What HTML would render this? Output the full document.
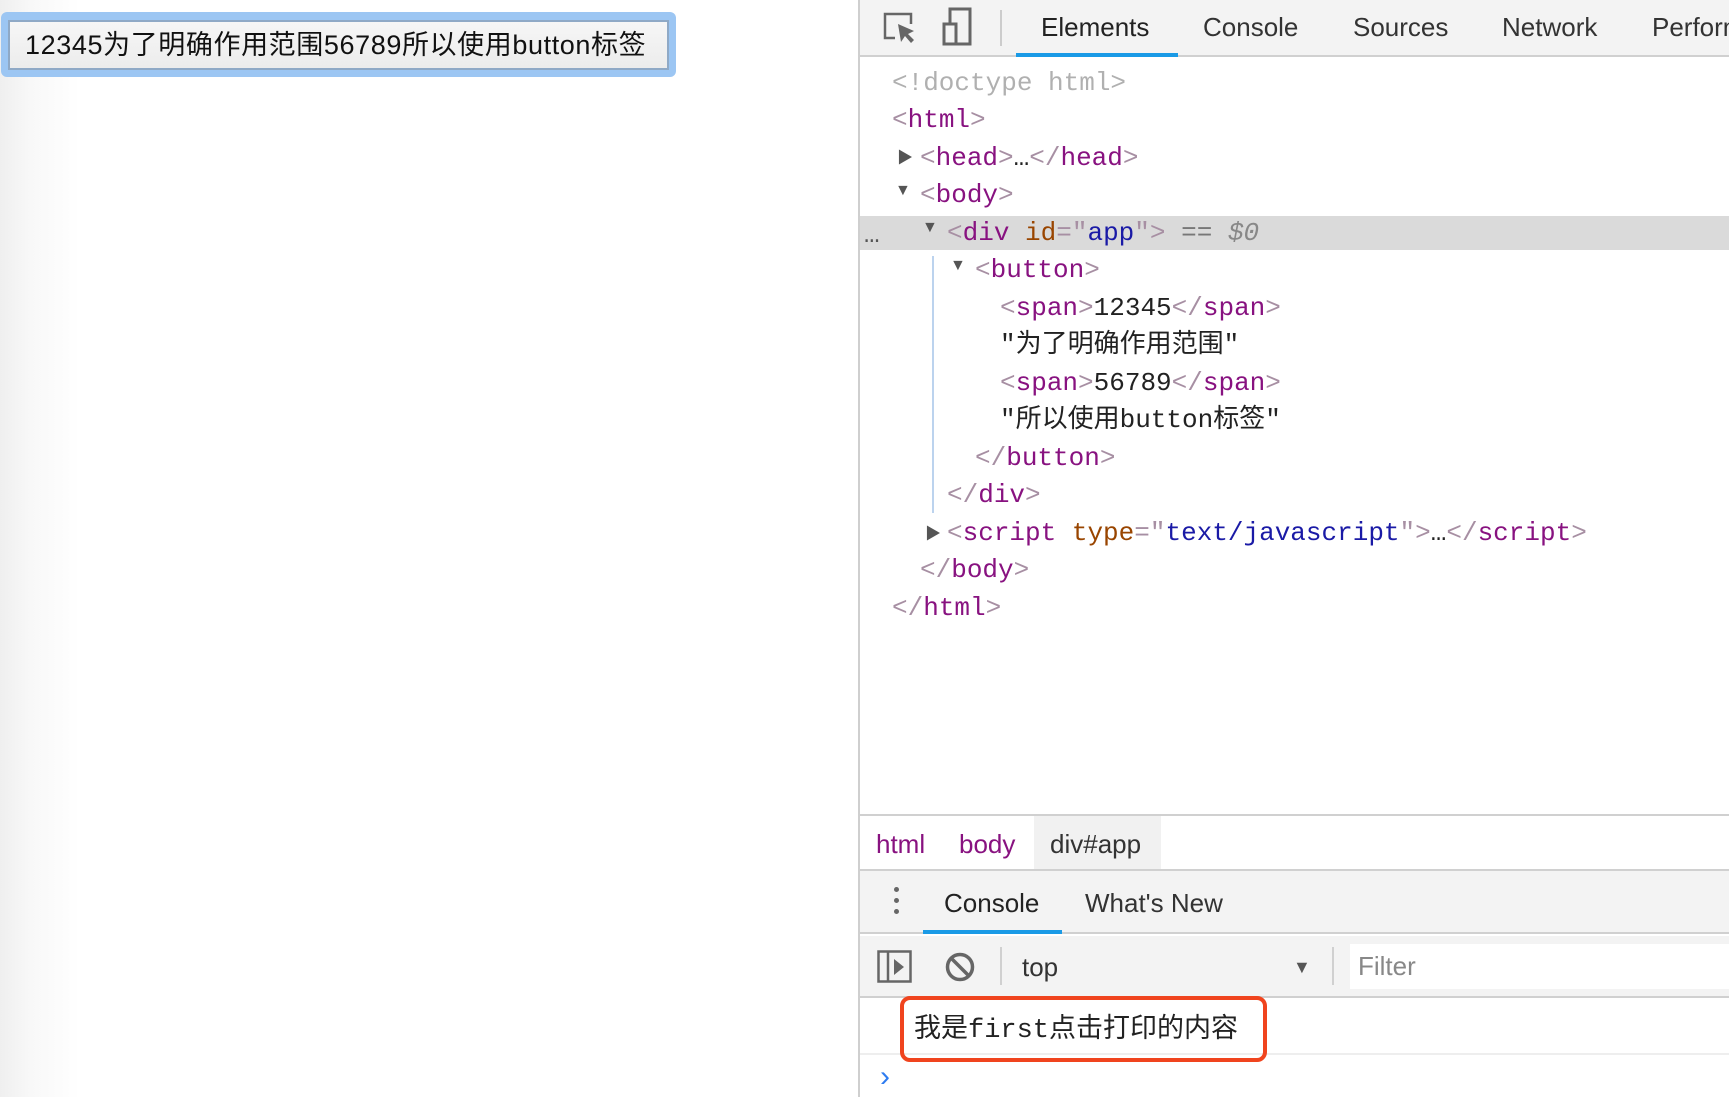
<!DOCTYPE html>
<html><head><meta charset="utf-8"><style>
*{margin:0;padding:0;box-sizing:border-box}
body{width:1729px;height:1097px;overflow:hidden;position:relative;background:#fff;font-family:"Liberation Sans","Noto Sans CJK SC",sans-serif}
.abs{position:absolute}
#left{left:0;top:0;width:859px;height:1097px;background:linear-gradient(to right,#efefef 0px,#f8f8f8 30px,#fff 80px)}
#btnglow{left:1px;top:12px;width:675px;height:65px;background:#9cc6f3;border-radius:6px}
#btn{left:8px;top:20px;width:661px;height:50px;background:linear-gradient(#f6f6f6,#ececec);border:2px solid #8fa9c6;font-size:27px;line-height:46px;padding-left:15px;color:#111;white-space:nowrap;letter-spacing:0.6px}
#div{left:858px;top:0;width:2px;height:1097px;background:#cfcfcf}
#tb{left:860px;top:0;width:869px;height:57px;background:#f3f3f3;border-bottom:2px solid #d0d0d0}
.tab{position:absolute;top:0;height:55px;line-height:55px;font-size:26px;color:#333}
.code{position:absolute;font-family:"Liberation Mono","Noto Sans CJK SC",monospace;font-size:26px;line-height:37.5px;height:37.5px;white-space:pre;color:#222}
.t{color:#881280}.b{color:#a78fa3}.an{color:#994500}.av{color:#1a1aa6}.g{color:#b0b0b0}
.tri{font-size:16px;color:#555;position:absolute}
.line{position:absolute;background:#d0d0d0}
</style></head><body>
<div id="left" class="abs"></div>
<div id="btnglow" class="abs"></div>
<div id="btn" class="abs">12345为了明确作用范围56789所以使用button标签</div>
<div id="div" class="abs"></div>
<div id="tb" class="abs">
 <svg class="abs" style="left:22px;top:10px" width="36" height="36" viewBox="0 0 36 36"><path d="M13 28H3V4h26v10" fill="none" stroke="#666" stroke-width="2.5"/><path d="M16 14l3 18 4-6 6 7 3-3-6-6 6-3z" fill="#666"/></svg>
 <svg class="abs" style="left:80px;top:6px" width="34" height="40" viewBox="0 0 34 40"><path d="M10 18V3h20v35H4V18h12v20" fill="none" stroke="#666" stroke-width="3"/></svg>
 <div class="abs" style="left:140px;top:10px;width:2px;height:36px;background:#ccc"></div>
 <div class="tab" style="left:181px;color:#222">Elements</div>
 <div class="abs" style="left:156px;top:53px;width:162px;height:4px;background:#1a9ae6"></div>
 <div class="tab" style="left:343px">Console</div>
 <div class="tab" style="left:493px">Sources</div>
 <div class="tab" style="left:642px">Network</div>
 <div class="tab" style="left:792px">Performance</div>
</div>
<div class="abs" style="left:860px;top:216px;width:869px;height:34px;background:#dadada"></div>
<div class="code" style="left:864px;top:217px;color:#555">…</div>
<div class="abs" style="left:932px;top:256px;width:2px;height:257px;background:#bcd3ee"></div>
<div class="code" style="left:892px;top:65px"><span class="g">&lt;!doctype html&gt;</span></div>
<div class="code" style="left:892px;top:102px"><span class="b">&lt;</span><span class="t">html</span><span class="b">&gt;</span></div>
<div class="tri" style="left:897px;top:144px">▶</div>
<div class="code" style="left:920px;top:140px"><span class="b">&lt;</span><span class="t">head</span><span class="b">&gt;</span>…<span class="b">&lt;/</span><span class="t">head</span><span class="b">&gt;</span></div>
<div class="tri" style="left:895px;top:182px">▼</div>
<div class="code" style="left:920px;top:177px"><span class="b">&lt;</span><span class="t">body</span><span class="b">&gt;</span></div>
<div class="tri" style="left:922px;top:219px">▼</div>
<div class="code" style="left:947px;top:215px"><span class="b">&lt;</span><span class="t">div</span> <span class="an">id</span><span class="b">="</span><span class="av">app</span><span class="b">"&gt;</span> <span style="color:#777">==</span> <span style="color:#888;font-style:italic">$0</span></div>
<div class="tri" style="left:950px;top:257px">▼</div>
<div class="code" style="left:975px;top:252px"><span class="b">&lt;</span><span class="t">button</span><span class="b">&gt;</span></div>
<div class="code" style="left:1000px;top:290px"><span class="b">&lt;</span><span class="t">span</span><span class="b">&gt;</span>12345<span class="b">&lt;/</span><span class="t">span</span><span class="b">&gt;</span></div>
<div class="code" style="left:1000px;top:327px">"为了明确作用范围"</div>
<div class="code" style="left:1000px;top:365px"><span class="b">&lt;</span><span class="t">span</span><span class="b">&gt;</span>56789<span class="b">&lt;/</span><span class="t">span</span><span class="b">&gt;</span></div>
<div class="code" style="left:1000px;top:402px">"所以使用button标签"</div>
<div class="code" style="left:975px;top:440px"><span class="b">&lt;/</span><span class="t">button</span><span class="b">&gt;</span></div>
<div class="code" style="left:947px;top:477px"><span class="b">&lt;/</span><span class="t">div</span><span class="b">&gt;</span></div>
<div class="tri" style="left:925px;top:520px">▶</div>
<div class="code" style="left:947px;top:515px"><span class="b">&lt;</span><span class="t">script</span> <span class="an">type</span><span class="b">="</span><span class="av">text/javascript</span><span class="b">"&gt;</span>…<span class="b">&lt;/</span><span class="t">script</span><span class="b">&gt;</span></div>
<div class="code" style="left:920px;top:552px"><span class="b">&lt;/</span><span class="t">body</span><span class="b">&gt;</span></div>
<div class="code" style="left:892px;top:590px"><span class="b">&lt;/</span><span class="t">html</span><span class="b">&gt;</span></div>

<div class="line" style="left:860px;top:814px;width:869px;height:2px"></div>
<div class="abs" style="left:1034px;top:816px;width:127px;height:53px;background:#f1f1f1"></div>
<div class="abs" style="left:876px;top:818px;height:53px;line-height:53px;font-size:26px;color:#881280">html</div>
<div class="abs" style="left:959px;top:818px;height:53px;line-height:53px;font-size:26px;color:#881280">body</div>
<div class="abs" style="left:1050px;top:818px;height:53px;line-height:53px;font-size:26px;color:#333">div#app</div>
<div class="line" style="left:860px;top:869px;width:869px;height:2px"></div>
<div class="abs" style="left:860px;top:871px;width:869px;height:63px;background:#f3f3f3;border-bottom:2px solid #d0d0d0"></div>
<div class="abs" style="left:894px;top:887px;width:5px;height:5px;border-radius:50%;background:#666;box-shadow:0 11px 0 #666,0 22px 0 #666"></div>
<div class="abs" style="left:944px;top:872px;height:62px;line-height:62px;font-size:26px;color:#222">Console</div>
<div class="abs" style="left:1085px;top:872px;height:62px;line-height:62px;font-size:26px;color:#333">What's New</div>
<div class="abs" style="left:923px;top:930px;width:139px;height:4px;background:#1a9ae6"></div>
<div class="abs" style="left:860px;top:936px;width:869px;height:62px;background:#f3f3f3;border-bottom:2px solid #d0d0d0"></div>
<svg class="abs" style="left:877px;top:950px" width="36" height="34" viewBox="0 0 36 34"><rect x="1.5" y="1.5" width="32" height="30" fill="none" stroke="#666" stroke-width="2.5"/><line x1="11" y1="2" x2="11" y2="32" stroke="#666" stroke-width="2.5"/><path d="M17 9l10 8-10 8z" fill="#666"/></svg>
<svg class="abs" style="left:944px;top:951px" width="32" height="32" viewBox="0 0 32 32"><circle cx="16" cy="16" r="12.5" fill="none" stroke="#666" stroke-width="3.5"/><line x1="7" y1="7" x2="25" y2="25" stroke="#666" stroke-width="3.5"/></svg>
<div class="abs" style="left:1000px;top:947px;width:2px;height:38px;background:#d0d0d0"></div>
<div class="abs" style="left:1022px;top:936px;height:62px;line-height:62px;font-size:26px;color:#333">top</div>
<div class="abs" style="left:1293px;top:936px;height:62px;line-height:62px;font-size:18px;color:#555">▼</div>
<div class="abs" style="left:1332px;top:947px;width:2px;height:38px;background:#d0d0d0"></div>
<div class="abs" style="left:1350px;top:944px;width:379px;height:45px;background:#fff"></div>
<div class="abs" style="left:1358px;top:944px;height:45px;line-height:45px;font-size:26px;color:#888">Filter</div>
<div class="line" style="left:860px;top:1053px;width:869px;height:2px;background:#eee"></div>
<div class="abs" style="left:900px;top:996px;width:367px;height:66px;border:4px solid #f0441e;border-radius:10px"></div>
<div class="abs" style="left:914px;top:1011px;height:40px;line-height:40px;font-size:27px;color:#222;font-family:'Liberation Mono','Noto Sans CJK SC',monospace">我是first点击打印的内容</div>
<div class="abs" style="left:880px;top:1060px;font-size:30px;color:#2e7cf0;line-height:34px">›</div>
</body></html>
